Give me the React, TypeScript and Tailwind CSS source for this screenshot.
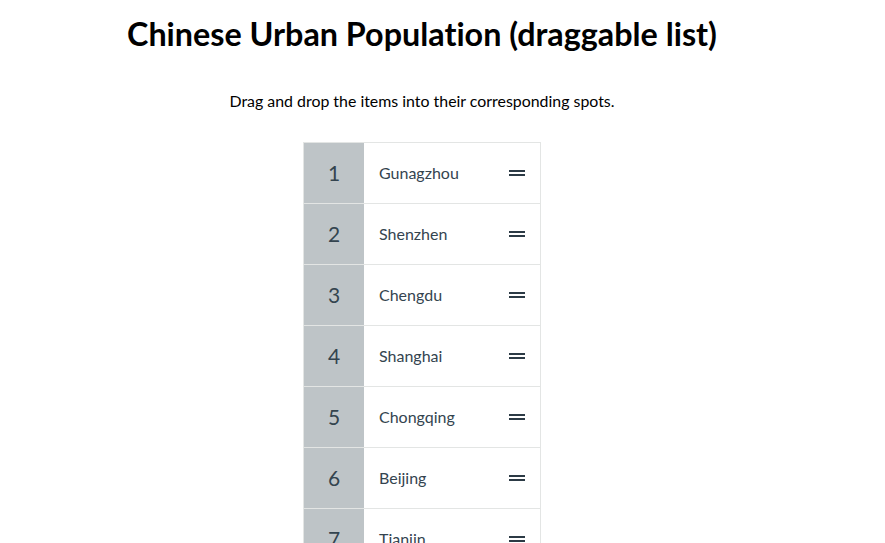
const cities = [
  'Gunagzhou',
  'Shenzhen',
  'Chengdu',
  'Shanghai',
  'Chongqing',
  'Beijing',
  'Tianjin',
  'Wuhan',
  'Xi\u2019an',
  'Hangzhou',
];

function GripLines() {
  return (
    <svg width="16" height="8" viewBox="0 0 16 8" aria-hidden="true" className="flex-shrink-0">
      <rect x="0" y="1" width="16" height="2" fill="#2c3a45" />
      <rect x="0" y="5" width="16" height="2" fill="#2c3a45" />
    </svg>
  );
}

export default function App() {
  return (
    <div className="w-[844px] h-[543px] overflow-hidden bg-white font-['Lato','Open_Sans',sans-serif] text-[#34444f] [font-variant-ligatures:none]">
      <div className="flex flex-col items-center">
        <h1 className="mt-[14px] text-[32.3px] leading-[40px] font-bold text-black">
          Chinese Urban Population (draggable list)
        </h1>
        <p className="mt-[37px] text-[15.9px] leading-[20px] text-black">
          Drag and drop the items into their corresponding spots.
        </p>
        <ul className="mt-[31px] w-[238px] border border-[#e3e5e4] list-none p-0">
          {cities.map((city, i) => (
            <li
              key={city}
              className={[
                'flex bg-white',
                i < cities.length - 1 ? 'border-b border-[#e3e5e4]' : '',
              ].join(' ')}
            >
              <span className="flex h-[60px] w-[60px] flex-shrink-0 items-center justify-center bg-[#bec4c7] text-[21px]">
                {i + 1}
              </span>
              <div className="flex flex-1 items-center justify-between px-[15px]">
                <p className="text-[16px]">{city}</p>
                <GripLines />
              </div>
            </li>
          ))}
        </ul>
      </div>
    </div>
  );
}
